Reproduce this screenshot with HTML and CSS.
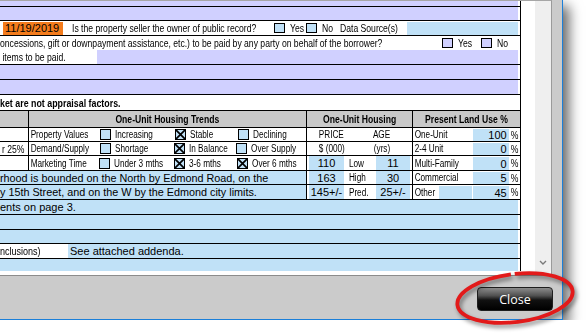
FILE: index.html
```html
<!DOCTYPE html>
<html lang="en">
<head>
    <meta charset="UTF-8">
    <title>Appraisal Form Viewer</title>
    <link rel="stylesheet" href="styles.css">
</head>
<body>
<div class="window">
    <div class="viewer">
        <div class="page">
            <div class="form">
                <div class="row h5"><div class="band lav"></div></div>
                <div class="row h13"><div class="band lav"></div></div>

                <!-- Contract / seller row -->
                <div class="row h14">
                    <span class="date-box">11/19/2019</span>
                    <span class="q-text nar">Is the property seller the owner of public record?</span>
                    <span class="cb"></span><span class="cb-label w-yes nar">Yes</span>
                    <span class="cb"></span><span class="cb-label w-no nar">No</span>
                    <span class="ds-label nar">Data Source(s)</span>
                    <span class="band blue box-ds"></span>
                </div>

                <div class="row h28 concessions">
                    <div class="c-line">
                        <span class="c-text nar">oncessions, gift or downpayment assistance, etc.) to be paid by any party on behalf of the borrower?</span>
                        <span class="cb lav-cb"></span><span class="cb-label w-yes2 nar">Yes</span>
                        <span class="cb lav-cb"></span><span class="cb-label nar">No</span>
                    </div>
                    <div class="c-line">
                        <span class="items nar">items to be paid.</span>
                        <span class="band lav"></span>
                    </div>
                </div>

                <div class="row h14"><div class="band lav"></div></div>
                <div class="row h14"><div class="band lav"></div></div>
                <div class="row h15"><span class="note nar">ket are not appraisal factors.</span></div>

                <!-- Neighborhood grid -->
                <div class="trends">
                    <div class="cell head"></div>
                    <div class="cell head"><span class="nar">One-Unit Housing Trends</span></div>
                    <div class="cell head"><span class="nar">One-Unit Housing</span></div>
                    <div class="cell head"><span class="nar">Present Land Use %</span></div>

                    <div class="cell"></div>
                    <div class="cell trend">
                        <span class="t-label nar">Property Values</span>
                        <span class="opt o1"><span class="cb"></span><span class="nar">Increasing</span></span>
                        <span class="opt o2"><span class="cb checked"><svg viewBox="0 0 9 9"><path d="M0 0L9 9M9 0L0 9"/></svg></span><span class="nar">Stable</span></span>
                        <span class="opt"><span class="cb"></span><span class="nar">Declining</span></span>
                    </div>
                    <div class="cell price">
                        <span class="p-head"><span class="nar">PRICE</span></span><span class="a-head"><span class="nar">AGE</span></span>
                    </div>
                    <div class="cell land">
                        <span class="l-label nar">One-Unit</span><span class="l-val">100</span><span class="pct nar">%</span>
                    </div>

                    <div class="cell built"><span class="nar">r 25%</span></div>
                    <div class="cell trend">
                        <span class="t-label nar">Demand/Supply</span>
                        <span class="opt o1"><span class="cb"></span><span class="nar">Shortage</span></span>
                        <span class="opt o2"><span class="cb checked"><svg viewBox="0 0 9 9"><path d="M0 0L9 9M9 0L0 9"/></svg></span><span class="nar">In Balance</span></span>
                        <span class="opt"><span class="cb"></span><span class="nar">Over Supply</span></span>
                    </div>
                    <div class="cell price">
                        <span class="p-head"><span class="nar">$ (000)</span></span><span class="a-head"><span class="nar">(yrs)</span></span>
                    </div>
                    <div class="cell land">
                        <span class="l-label nar">2-4 Unit</span><span class="l-val">0</span><span class="pct nar">%</span>
                    </div>

                    <div class="cell"></div>
                    <div class="cell trend">
                        <span class="t-label nar">Marketing Time</span>
                        <span class="opt o1"><span class="cb"></span><span class="nar">Under 3 mths</span></span>
                        <span class="opt o2"><span class="cb checked"><svg viewBox="0 0 9 9"><path d="M0 0L9 9M9 0L0 9"/></svg></span><span class="nar">3-6 mths</span></span>
                        <span class="opt"><span class="cb checked"><svg viewBox="0 0 9 9"><path d="M0 0L9 9M9 0L0 9"/></svg></span><span class="nar">Over 6 mths</span></span>
                    </div>
                    <div class="cell price">
                        <span class="v-box">110</span><span class="v-label nar">Low</span><span class="v-box age">11</span>
                    </div>
                    <div class="cell land">
                        <span class="l-label nar">Multi-Family</span><span class="l-val">0</span><span class="pct nar">%</span>
                    </div>

                    <div class="cell boundary">rhood is bounded on the North by Edmond Road, on the</div>
                    <div class="cell price">
                        <span class="v-box">163</span><span class="v-label nar">High</span><span class="v-box age">30</span>
                    </div>
                    <div class="cell land">
                        <span class="l-label nar">Commercial</span><span class="l-val">5</span><span class="pct nar">%</span>
                    </div>

                    <div class="cell boundary">y 15th Street, and on the W by the Edmond city limits.</div>
                    <div class="cell price">
                        <span class="v-box">145+/-</span><span class="v-label nar">Pred.</span><span class="v-box age">25+/-</span>
                    </div>
                    <div class="cell land">
                        <span class="l-label other nar">Other</span><span class="other-box"></span><span class="l-val">45</span><span class="pct nar">%</span>
                    </div>
                </div>

                <div class="row h14"><div class="band blue text">ents on page 3.</div></div>
                <div class="row h14"><div class="band blue"></div></div>
                <div class="row h13"><div class="band blue"></div></div>
                <div class="row h14">
                    <span class="incl nar">nclusions)</span>
                    <div class="band blue text addenda">See attached addenda.</div>
                </div>
                <div class="band blue last"></div>
            </div>
        </div>
        <div class="scrollbar">
            <svg class="chevron" viewBox="0 0 8 5"><path d="M1 1L4 4L7 1"/></svg>
        </div>
    </div>
    <div class="footer">
        <button class="close-btn">Close</button>
    </div>
</div>

<!-- red circle drawn around the Close button -->
<svg class="annotation" viewBox="0 0 132 64" width="132" height="64">
    <ellipse cx="65" cy="32" rx="58" ry="24" transform="rotate(-7 65 32)"
             stroke-dasharray="200 4 100"/>
</svg>
</body>
</html>
```

FILE: styles.css
```css
* {
    box-sizing: border-box;
}
body {
    margin: 0;
    background: #fff;
    overflow: hidden;
    font-family: "Liberation Sans", Arial, sans-serif;
    font-size: 10px;
    color: #000;
}

/* Arial Narrow look: no narrow face installed, so squeeze Arial */
.nar {
    display: inline-block;
    transform: scaleX(0.82);
    transform-origin: 0 50%;
}

/* Dialog window */
.window {
    width: 563px;
    height: 320px;
    background: #cbcbcb;
    border-right: 1px solid #1b7fd9;
    border-bottom: 1px solid #1b7fd9;
    box-shadow: 6px 6px 12px rgba(0, 0, 0, 0.6);
}
.viewer {
    display: flex;
    width: 552px;
    height: 276px;
    background: #fff;
    border-top: 1px solid #a6a6a6;
    border-right: 1px solid #9a9a9a;
    border-bottom: 1px solid #8c8c8c;
}
.page {
    width: 535px;
    overflow: hidden;
    background: #fff;
}
.scrollbar {
    width: 16px;
    margin-bottom: 2px;
    background: #efefef;
    border-bottom-right-radius: 4px;
    display: flex;
    align-items: flex-end;
    justify-content: center;
}
.chevron {
    width: 8px;
    height: 5px;
    margin-bottom: 8px;
    fill: none;
    stroke: #7a7a7a;
    stroke-width: 1.4;
}
.footer {
    display: flex;
    justify-content: flex-end;
    padding: 11px 9px 0 0;
}
.close-btn {
    width: 76px;
    height: 24px;
    border: 1px solid #1e1e1e;
    border-radius: 4px;
    background: linear-gradient(#8c8c8c 0%, #505050 35%, #111 55%, #000 100%);
    color: #fff;
    font-family: "Open Sans", "Noto Sans", sans-serif;
    font-size: 12.5px;
    padding: 0;
    cursor: pointer;
}

/* Form */
.form {
    width: 521px;
    height: 270px;
    border-right: 1px solid #000;
}
.row {
    display: flex;
    align-items: center;
    border-bottom: 1px solid #000;
    white-space: nowrap;
}
.h5 { height: 6px; }
.h13 { height: 14px; }
.h14 { height: 15px; }
.h15 { height: 16px; }
.h28 { height: 29px; }
.band {
    flex: 1;
    align-self: stretch;
    margin-right: 2px;
}
.lav { background: #d0d0ff; }
.blue { background: #c0e1f7; }
.band.text {
    display: flex;
    align-items: center;
    font-size: 11px;
}
.last {
    flex: none;
    height: 12px;
}

.date-box {
    width: 60px;
    height: 13px;
    margin: 1px 0 0 3px;
    padding-left: 2px;
    background: #f47c1c;
    font-size: 11px;
    line-height: 13px;
}
.q-text {
    width: 202px;
    margin-left: 9px;
    font-size: 10.5px;
}
.cb {
    display: inline-block;
    flex: none;
    width: 11px;
    height: 10px;
    border: 1px solid #000;
    background: #c0e1f7;
}
.lav-cb {
    background: #d0d0ff;
}
.cb-label {
    margin-left: 5px;
    font-size: 10.5px;
}
.w-yes { width: 16px; }
.w-no { width: 13px; }
.w-yes2 { width: 23px; }
.ds-label {
    width: 67px;
    margin-left: 5px;
    font-size: 10.5px;
}
.box-ds {
    margin-top: 1px;
}

.concessions {
    flex-direction: column;
    align-items: stretch;
}
.c-line {
    display: flex;
    align-items: center;
    height: 14px;
}
.c-text {
    width: 442px;
    font-size: 10.5px;
}
.items {
    width: 97px;
    padding-left: 3px;
    font-size: 10.5px;
}
.note {
    font-weight: bold;
    font-size: 10.8px;
}

/* Neighborhood grid */
.trends {
    display: grid;
    grid-template-columns: 28px 277px 105px 107px;
    grid-template-rows: 16px 13px 13px 14px 13px 14px;
    gap: 1px;
    background: #000;
    border-bottom: 1px solid #000;
}
.cell {
    display: flex;
    align-items: center;
    background: #fff;
    white-space: nowrap;
    overflow: hidden;
}
.cell.head {
    justify-content: center;
    background: #c9c9c9;
    font-weight: bold;
    font-size: 10.5px;
}
.head .nar,
.p-head .nar,
.a-head .nar {
    transform-origin: 50% 50%;
}
.built {
    justify-content: flex-end;
    padding-right: 4px;
    font-size: 10.5px;
}
.built .nar {
    transform-origin: 100% 50%;
}
.trend .cb {
    width: 11px;
    height: 11px;
    margin-right: 4px;
}
.t-label {
    width: 71px;
    padding-left: 2px;
}
.opt {
    display: flex;
    align-items: center;
}
.o1 { width: 75px; }
.o2 { width: 63px; }
.checked svg {
    display: block;
    width: 9px;
    height: 9px;
    fill: none;
    stroke: #000;
    stroke-width: 1.7;
}
.boundary {
    grid-column: 1 / 3;
    background: #c0e1f7;
    font-size: 10.8px;
}

.price {
    padding: 0 2px;
}
.p-head {
    width: 46px;
    text-align: center;
}
.a-head {
    width: 57px;
    text-align: center;
}
.v-box {
    align-self: stretch;
    display: flex;
    align-items: center;
    justify-content: center;
    width: 35px;
    background: #c0e1f7;
    font-size: 11px;
}
.v-box.age {
    width: 34px;
}
.v-label {
    width: 32px;
    padding-left: 6px;
}

.l-label {
    width: 60px;
    padding-left: 2px;
}
.l-label.other {
    width: 26px;
}
.other-box {
    align-self: stretch;
    width: 33px;
    margin: 1px 1px 0 0;
    background: #c0e1f7;
}
.l-val {
    align-self: stretch;
    display: flex;
    align-items: center;
    justify-content: flex-end;
    width: 36px;
    margin-top: 1px;
    padding-right: 2px;
    background: #c0e1f7;
    font-size: 11px;
}
.pct {
    padding-left: 2px;
    font-size: 10.5px;
}

.incl {
    width: 68px;
    font-size: 11px;
}
.addenda {
    padding-left: 2px;
}

/* Red annotation circle */
.annotation {
    position: absolute;
    left: 450px;
    top: 266px;
    overflow: visible;
    filter: drop-shadow(2px 3px 2px rgba(0, 0, 0, 0.45));
}
.annotation ellipse {
    fill: none;
    stroke: #e21a1a;
    stroke-width: 3.8;
}
```
